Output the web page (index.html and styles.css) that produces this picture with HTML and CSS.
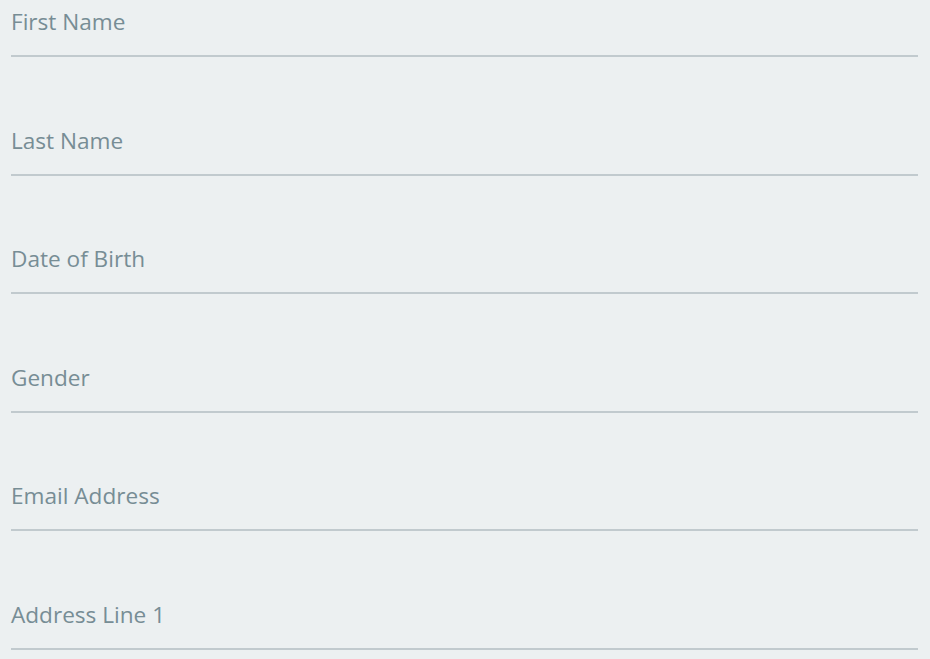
FILE: index.html
```html
<!DOCTYPE html>
<html>
<head>
<meta charset="utf-8">
<link rel="stylesheet" href="styles.css">
</head>
<body>
<form class="form">
  <div class="field"><span class="label">First Name</span></div>
  <div class="field"><span class="label">Last Name</span></div>
  <div class="field"><span class="label">Date of Birth</span></div>
  <div class="field"><span class="label">Gender</span></div>
  <div class="field"><span class="label">Email Address</span></div>
  <div class="field"><span class="label">Address Line 1</span></div>
</form>
</body>
</html>
```
FILE: styles.css
```css
html, body {
  margin: 0;
  padding: 0;
  background: #ecf0f1;
}
.form {
  display: flex;
  flex-direction: column;
  gap: 61.5px;
  padding: 0 12px 0 11px;
}
.field {
  height: 55px;
  border-bottom: 2px solid #c1cace;
  display: flex;
  align-items: flex-start;
}
.label {
  font-family: "Open Sans", "Noto Sans", sans-serif;
  font-size: 22.6px;
  line-height: 28px;
  margin-top: 8px;
  color: #778d95;
}
```
